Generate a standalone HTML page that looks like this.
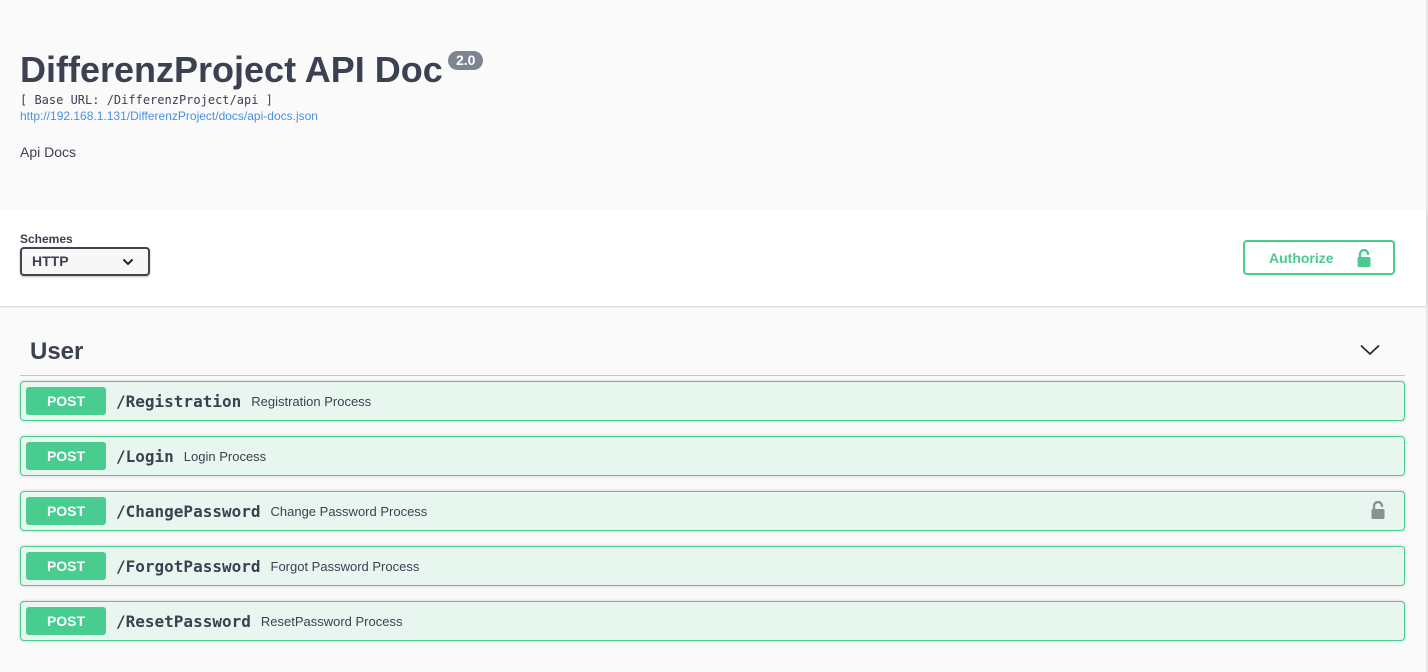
<!DOCTYPE html>
<html><head><meta charset="utf-8"><style>
*{box-sizing:border-box;margin:0;padding:0}
body{width:1428px;height:672px;overflow:hidden;background:#fafafa;font-family:"Liberation Sans",sans-serif;color:#3b4151;position:relative}
.rline{position:absolute;right:0;top:0;width:2px;height:672px;background:#e6e6e6}
h1{position:absolute;left:20px;top:49px;font-size:36px;font-weight:bold;line-height:42px;color:#3b4151;letter-spacing:0px}
.ver{position:absolute;left:448px;top:51px;background:#7d8492;color:#fff;font-size:14px;font-weight:bold;border-radius:57px;padding:1px 8px;line-height:17px}
.base{position:absolute;left:20px;top:93px;font-family:"DejaVu Sans Mono","Liberation Mono",monospace;font-size:12px;line-height:15px;color:#3b4151}
.link{position:absolute;left:20px;top:109px;font-size:12px;line-height:15px;color:#4990e2}
.desc{position:absolute;left:20px;top:144px;font-size:14px;line-height:17px}
.sch{position:absolute;left:0;top:210px;width:1426px;height:96px;background:#fff;box-shadow:0 1px 2px rgba(0,0,0,.15)}
.sl{position:absolute;left:20px;top:22px;font-size:12px;font-weight:bold}
.sel{position:absolute;left:20px;top:37px;width:130px;height:29px;border:2px solid #41444e;border-radius:4px;background:#f7f7f7;box-shadow:0 1px 2px rgba(0,0,0,.25);font-size:14px;font-weight:bold;padding:5px 10px;line-height:15px}
.sel svg{position:absolute;right:14px;top:9px}
.auth{position:absolute;left:1243px;top:30px;width:152px;height:35px;border:2px solid #49cc90;border-radius:4px;color:#49cc90;font-weight:bold;font-size:14px;line-height:33px;padding-left:24px}
.auth svg{position:absolute;left:111px;top:7px}
.tag{position:absolute;left:30px;top:338px;font-size:24px;font-weight:bold;line-height:28px}
.tagline{position:absolute;left:20px;top:375px;width:1385px;height:1px;background:#c4c4c4}
.chev{position:absolute;left:1360px;top:344px}
.op{position:absolute;left:20px;width:1385px;height:40px;border:1px solid #49cc90;border-radius:4px;background:#e8f6f0;box-shadow:0 0 3px rgba(0,0,0,.19)}
.m{position:absolute;left:5px;top:5px;width:80px;height:28px;background:#49cc90;border-radius:3px;color:#fff;font-weight:bold;font-size:14px;text-align:center;line-height:28px}
.p{position:absolute;left:95px;top:10px;font-family:"DejaVu Sans Mono",monospace;font-weight:bold;font-size:16px;line-height:19px;color:#3b4151}
.d{font-family:"Liberation Sans",sans-serif;font-weight:normal;font-size:13px;margin-left:10px;position:relative;top:-1px}
.lk{position:absolute;right:18px;top:9px}
</style></head><body>
<div class="rline"></div>
<h1>DifferenzProject API Doc</h1>
<div class="ver">2.0</div>
<div class="base">[ Base URL: /DifferenzProject/api ]</div>
<div class="link">http://192.168.1.131/DifferenzProject/docs/api-docs.json</div>
<div class="desc">Api Docs</div>
<div class="sch">
<div class="sl">Schemes</div>
<div class="sel">HTTP<svg width="12" height="8" viewBox="0 0 12 8"><path d="M1.5 1.5L6 6L10.5 1.5" stroke="#222" stroke-width="2" fill="none"/></svg></div>
<div class="auth">Authorize<svg width="16" height="18" viewBox="0 0 16 18"><path d="M4 8V5a4 4 0 0 1 8 0v1" stroke="#49cc90" stroke-width="2.4" fill="none"/><rect x="1.5" y="8" width="13" height="10" rx="1.5" fill="#49cc90"/></svg></div>
</div>
<div class="tag">User</div>
<svg class="chev" width="20" height="12" viewBox="0 0 20 12"><path d="M1 1.5L10 10L19 1.5" stroke="#222" stroke-width="1.6" fill="none"/></svg>
<div class="tagline"></div>
<div class="op" style="top:381px"><div class="m">POST</div><div class="p">/Registration<span class="d">Registration Process</span></div></div>
<div class="op" style="top:436px"><div class="m">POST</div><div class="p">/Login<span class="d">Login Process</span></div></div>
<div class="op" style="top:491px"><div class="m">POST</div><div class="p">/ChangePassword<span class="d">Change Password Process</span></div><svg class="lk" width="16" height="18" viewBox="0 0 16 18"><path d="M4 8V5a4 4 0 0 1 8 0v1" stroke="#8a918e" stroke-width="2.4" fill="none"/><rect x="1.5" y="8" width="13" height="10" rx="1.5" fill="#8a918e"/></svg></div>
<div class="op" style="top:546px"><div class="m">POST</div><div class="p">/ForgotPassword<span class="d">Forgot Password Process</span></div></div>
<div class="op" style="top:601px"><div class="m">POST</div><div class="p">/ResetPassword<span class="d">ResetPassword Process</span></div></div>
</body></html>
